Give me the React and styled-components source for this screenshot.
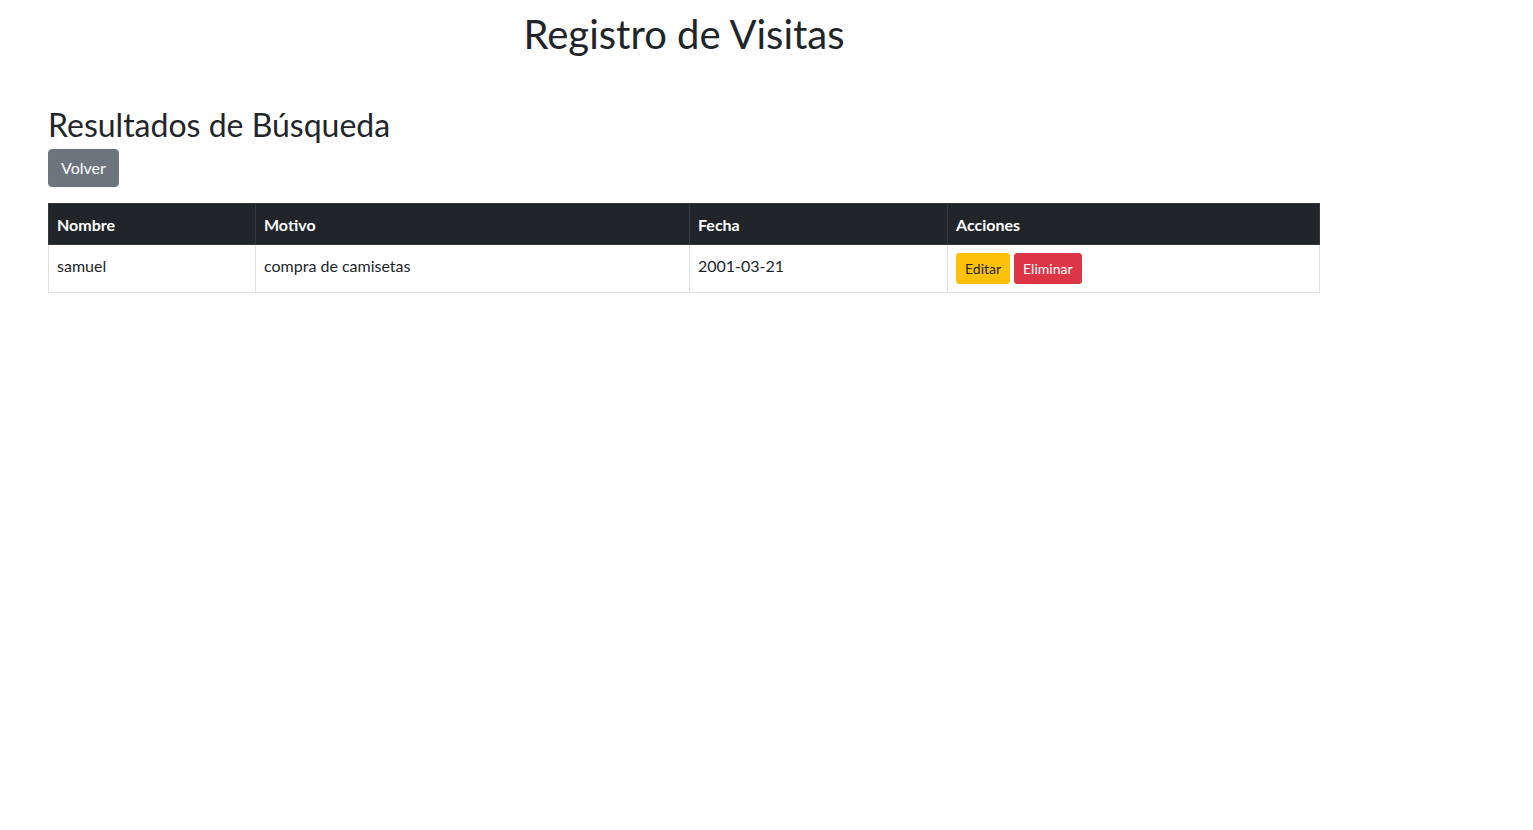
import React from 'react'
import styled, { createGlobalStyle } from 'styled-components'

const GlobalStyle = createGlobalStyle`
  body {
    margin: 0;
    background: #fff;
    color: #212529;
    font-family: "Segoe UI", Lato, "Liberation Sans", sans-serif;
    font-size: 16px;
    line-height: 1.5;
  }
`

const Page = styled.div`
  width: 1272px;
  margin-left: 48px;
  display: flex;
  flex-direction: column;
  align-items: flex-start;
`

const Title = styled.h1`
  align-self: stretch;
  text-align: center;
  margin: 10px 0 0;
  font-size: 40px;
  font-weight: 400;
  line-height: 1.2;
`

const Subtitle = styled.h2`
  margin: 48px 0 5px;
  font-size: 32px;
  font-weight: 400;
  line-height: 1.2;
`

const Button = styled.button`
  display: inline-block;
  font-family: inherit;
  font-size: ${p => (p.small ? '14px' : '16px')};
  line-height: 1.5;
  padding: ${p => (p.small ? '4px 8px' : '6px 12px')};
  border: 1px solid ${p => p.bg};
  border-radius: ${p => (p.small ? '3px' : '4px')};
  background: ${p => p.bg};
  color: ${p => p.fg};
  cursor: pointer;
`

const Table = styled.table`
  width: 1272px;
  margin-top: 16px;
  border-collapse: collapse;
  table-layout: fixed;
`

const Th = styled.th`
  text-align: left;
  padding: 9px 8px 7px;
  background: #212529;
  color: #fff;
  font-weight: 700;
  border: 1px solid #32383e;
  vertical-align: bottom;
`

const Td = styled.td`
  padding: 9px 8px 8px;
  border: 1px solid #dee2e6;
  vertical-align: top;
`

const Actions = styled.div`
  display: flex;
  gap: 4px;
  margin-top: -1px;
`

const columns = [
  { label: 'Nombre', width: 207 },
  { label: 'Motivo', width: 434 },
  { label: 'Fecha', width: 258 },
  { label: 'Acciones', width: 372 },
]

const rows = [{ nombre: 'samuel', motivo: 'compra de camisetas', fecha: '2001-03-21' }]

export default function App() {
  return (
    <>
      <GlobalStyle />
      <Page>
        <Title>Registro de Visitas</Title>
        <Subtitle>Resultados de Búsqueda</Subtitle>
        <Button bg="#6c757d" fg="#fff">Volver</Button>
        <Table>
          <colgroup>
            {columns.map(c => <col key={c.label} style={{ width: c.width }} />)}
          </colgroup>
          <thead>
            <tr>
              {columns.map(c => <Th key={c.label}>{c.label}</Th>)}
            </tr>
          </thead>
          <tbody>
            {rows.map(r => (
              <tr key={r.nombre}>
                <Td>{r.nombre}</Td>
                <Td>{r.motivo}</Td>
                <Td>{r.fecha}</Td>
                <Td>
                  <Actions>
                    <Button small bg="#ffc107" fg="#212529">Editar</Button>
                    <Button small bg="#dc3545" fg="#fff">Eliminar</Button>
                  </Actions>
                </Td>
              </tr>
            ))}
          </tbody>
        </Table>
      </Page>
    </>
  )
}
